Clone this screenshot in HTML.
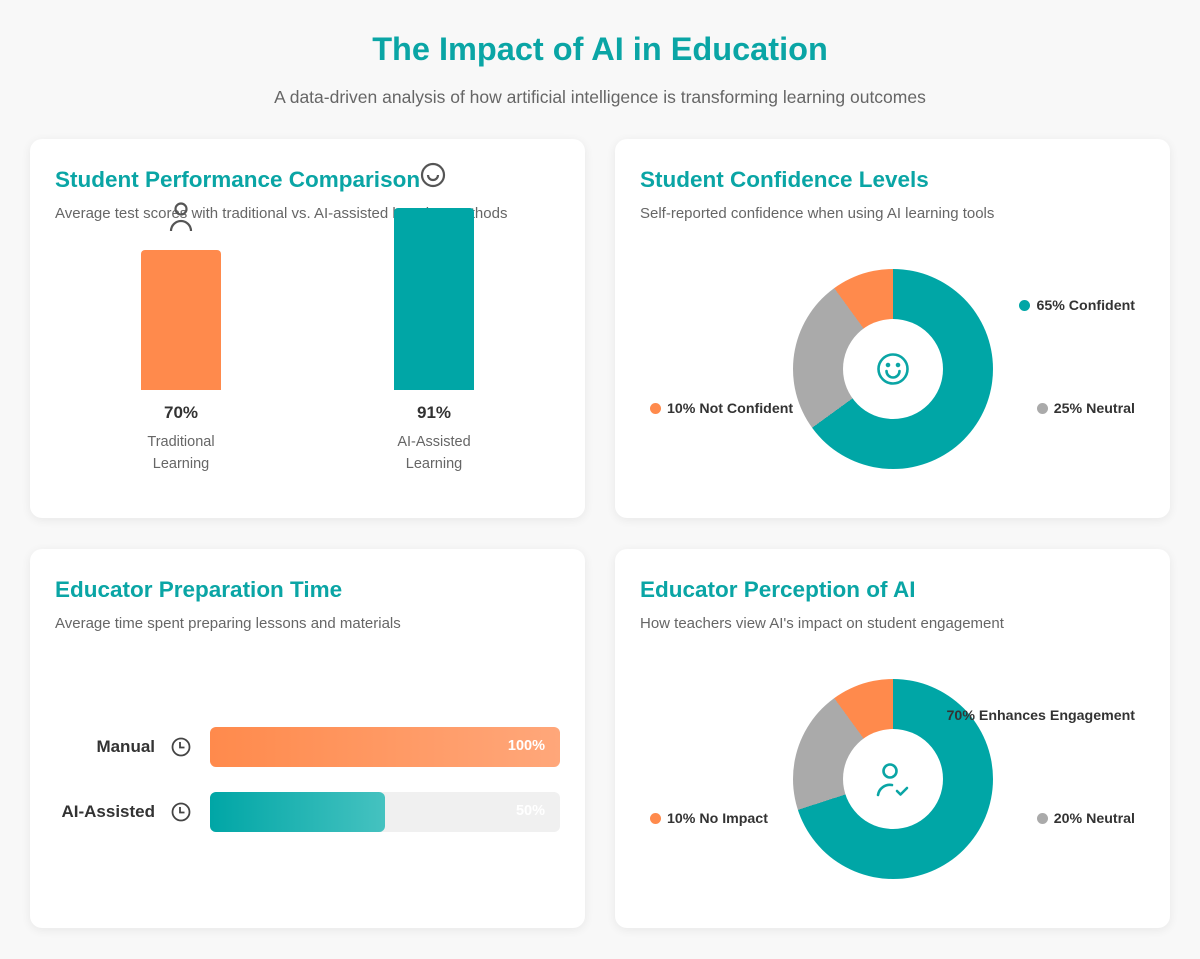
<!DOCTYPE html>
<html><head><meta charset="utf-8"><style>
*{margin:0;padding:0;box-sizing:border-box}
body{width:1200px;height:959px;background:#f8f8f8;font-family:"Liberation Sans",sans-serif;position:relative;overflow:hidden}
.a{position:absolute;white-space:nowrap}
.card{position:absolute;background:#fff;border-radius:12px;box-shadow:0 2px 10px rgba(0,0,0,0.07)}
.h{position:absolute;font-size:22.5px;font-weight:bold;color:#0aa5a5;white-space:nowrap}
.s{position:absolute;font-size:15px;color:#666;white-space:nowrap}
.lg{position:absolute;font-size:14.2px;font-weight:bold;color:#333;white-space:nowrap;line-height:16px}
.r{text-align:right}
.dot{display:inline-block;width:11px;height:11px;border-radius:50%;vertical-align:-1px;margin-right:6px}
.donut{position:absolute;width:200px;height:200px;border-radius:50%}
.hole{position:absolute;left:50px;top:50px;width:100px;height:100px;border-radius:50%;background:#fff}
</style></head><body>
<div class="a" style="left:0;width:1200px;text-align:center;top:31px;font-size:32.5px;font-weight:bold;color:#0aa5a5">The Impact of AI in Education</div>
<div class="a" style="left:0;width:1200px;text-align:center;top:87px;font-size:17.5px;color:#666">A data-driven analysis of how artificial intelligence is transforming learning outcomes</div>

<div class="card" style="left:30px;top:139px;width:555px;height:379px"></div>
<div class="card" style="left:615px;top:139px;width:555px;height:379px"></div>
<div class="card" style="left:30px;top:549px;width:555px;height:379px"></div>
<div class="card" style="left:615px;top:549px;width:555px;height:379px"></div>

<!-- Card 1 -->
<div class="h" style="left:55px;top:167px">Student Performance Comparison</div>
<div class="s" style="left:55px;top:205px">Average test scores with traditional vs. AI-assisted learning methods</div>
<div class="a" style="left:141px;top:250px;width:80px;height:140px;background:#ff8a4c;border-radius:4px 4px 0 0"></div>
<div class="a" style="left:394px;top:208px;width:80px;height:182px;background:#00a6a6;border-radius:4px 4px 0 0"></div>
<svg class="a" style="left:168px;top:202px" width="26" height="30" viewBox="0 0 26 30" fill="none" stroke="#555" stroke-width="2.2"><circle cx="13" cy="7" r="5.5"/><path d="M3 29a10 10 0 0 1 20 0"/></svg>
<svg class="a" style="left:420px;top:162px" width="26" height="26" viewBox="0 0 26 26" fill="none" stroke="#555" stroke-width="2.2"><circle cx="13" cy="13" r="11"/><path d="M8 13a5 5 0 0 0 10 0"/></svg>
<div class="a" style="left:121px;width:120px;text-align:center;top:403px;font-size:17px;font-weight:bold;color:#333">70%</div>
<div class="a" style="left:374px;width:120px;text-align:center;top:403px;font-size:17px;font-weight:bold;color:#333">91%</div>
<div class="a" style="left:111px;width:140px;text-align:center;top:431px;font-size:14.5px;line-height:22px;color:#666;white-space:normal">Traditional<br>Learning</div>
<div class="a" style="left:364px;width:140px;text-align:center;top:431px;font-size:14.5px;line-height:22px;color:#666;white-space:normal">AI-Assisted<br>Learning</div>

<!-- Card 2 -->
<div class="h" style="left:640px;top:167px">Student Confidence Levels</div>
<div class="s" style="left:640px;top:205px">Self-reported confidence when using AI learning tools</div>
<div class="donut" style="left:793px;top:269px;background:conic-gradient(#00a6a6 0 65%,#aaaaaa 65% 90%,#ff8a4c 90% 100%)"><div class="hole"></div></div>
<svg class="a" style="left:876px;top:352px" width="34" height="34" viewBox="0 0 34 34" fill="none" stroke="#0aa5a5" stroke-width="2.6"><circle cx="17" cy="17" r="14.5"/><path d="M10.5 19a6.5 6.5 0 0 0 13 0" stroke-linecap="round"/><circle cx="12" cy="13" r="1" fill="#0aa5a5"/><circle cx="22" cy="13" r="1" fill="#0aa5a5"/></svg>
<div class="lg r" style="left:935px;width:200px;top:298px"><span class="dot" style="background:#00a6a6"></span>65% Confident</div>
<div class="lg" style="left:650px;top:401px"><span class="dot" style="background:#ff8a4c"></span>10% Not Confident</div>
<div class="lg r" style="left:935px;width:200px;top:401px"><span class="dot" style="background:#aaa"></span>25% Neutral</div>

<!-- Card 3 -->
<div class="h" style="left:55px;top:577px">Educator Preparation Time</div>
<div class="s" style="left:55px;top:615px">Average time spent preparing lessons and materials</div>
<div class="a" style="left:0;width:155px;text-align:right;top:737px;font-size:17px;font-weight:bold;color:#333">Manual</div>
<div class="a" style="left:0;width:155px;text-align:right;top:802px;font-size:17px;font-weight:bold;color:#333">AI-Assisted</div>
<svg class="a" style="left:171px;top:737px" width="20" height="20" viewBox="0 0 20 20" fill="none" stroke="#444" stroke-width="1.8"><circle cx="10" cy="10" r="8.5"/><path d="M9 5v5.5h4.5"/></svg>
<svg class="a" style="left:171px;top:802px" width="20" height="20" viewBox="0 0 20 20" fill="none" stroke="#444" stroke-width="1.8"><circle cx="10" cy="10" r="8.5"/><path d="M9 5v5.5h4.5"/></svg>
<div class="a" style="left:210px;top:727px;width:350px;height:40px;border-radius:6px;background:linear-gradient(90deg,#ff8a4c,#ffa77a)"></div>
<div class="a" style="left:210px;top:738px;width:335px;text-align:right;font-size:14.5px;font-weight:bold;color:#fff">100%</div>
<div class="a" style="left:210px;top:792px;width:350px;height:40px;border-radius:6px;background:#f0f0f0"></div>
<div class="a" style="left:210px;top:792px;width:175px;height:40px;border-radius:6px;background:linear-gradient(90deg,#00a6a6,#45c2c0)"></div>
<div class="a" style="left:210px;top:803px;width:335px;text-align:right;font-size:14.5px;font-weight:bold;color:#fff">50%</div>

<!-- Card 4 -->
<div class="h" style="left:640px;top:577px">Educator Perception of AI</div>
<div class="s" style="left:640px;top:615px">How teachers view AI's impact on student engagement</div>
<div class="donut" style="left:793px;top:679px;background:conic-gradient(#00a6a6 0 70%,#aaaaaa 70% 90%,#ff8a4c 90% 100%)"><div class="hole"></div></div>
<svg class="a" style="left:874px;top:760px" width="40" height="40" viewBox="0 0 40 40" fill="none" stroke="#0aa5a5" stroke-width="2.6" stroke-linecap="round" stroke-linejoin="round"><circle cx="16" cy="11" r="6.5"/><path d="M4 35a12 12 0 0 1 14-10"/><path d="M23 31l3.5 3.5 6.5-6.5"/></svg>
<div class="lg r" style="left:885px;width:250px;top:708px">70% Enhances Engagement</div>
<div class="lg" style="left:650px;top:811px"><span class="dot" style="background:#ff8a4c"></span>10% No Impact</div>
<div class="lg r" style="left:935px;width:200px;top:811px"><span class="dot" style="background:#aaa"></span>20% Neutral</div>
</body></html>
